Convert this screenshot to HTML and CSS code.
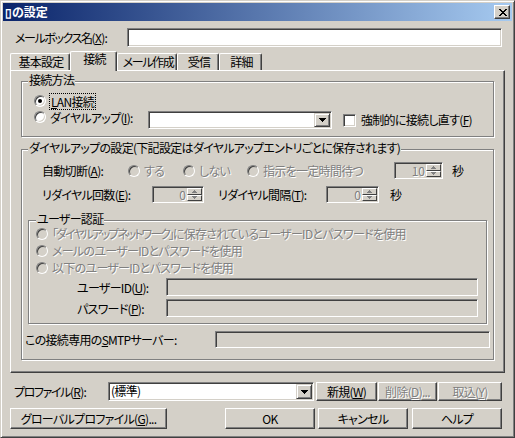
FILE: index.html
```html
<!DOCTYPE html>
<html lang="ja">
<head>
<meta charset="utf-8">
<title>の設定</title>
<link rel="stylesheet" href="styles.css">
</head>
<body>
<div class="window">
  <div class="titlebar">
    <span class="title">▯の設定</span>
    <span class="close"><svg width="8" height="7" viewBox="0 0 8 7" shape-rendering="crispEdges"><path d="M0 0h2v1H0zM6 0h2v1H6zM1 1h2v1H1zM5 1h2v1H5zM2 2h4v1H2zM3 3h2v1H3zM2 4h4v1H2zM1 5h2v1H1zM5 5h2v1H5zM0 6h2v1H0zM6 6h2v1H6z" fill="#000"/></svg></span>
  </div>

  <div class="client">
    <div class="row mailbox-row">
      <span class="lbl w-mailbox"><span class="tight">メールボックス名</span>(<u>X</u>):</span>
      <div class="edit mailbox-edit"></div>
    </div>

    <div class="tabs">
      <div class="tab t1">基本設定</div>
      <div class="tab sel t2">接続</div>
      <div class="tab t3"><span class="tight">メール作成</span></div>
      <div class="tab t4">受信</div>
      <div class="tab t5">詳細</div>
    </div>

    <div class="pane">
      <div class="group g1">
        <span class="legend">接続方法</span>
        <div class="row g1-r1">
          <span class="radio on"></span>
          <span class="opt focus"><u>L</u>AN接続</span>
        </div>
        <div class="row g1-r2">
          <div class="ritem w-dial">
            <span class="radio"></span>
            <span class="opt">ダイヤルアップ(<u>I</u>):</span>
          </div>
          <div class="edit combo dial-combo">
            <span class="combo-text"></span>
            <span class="dd"><svg width="7" height="4" viewBox="0 0 7 4" shape-rendering="crispEdges"><path d="M0 0h7v1H0zM1 1h5v1H1zM2 2h3v1H2zM3 3h1v1H3z" fill="#000"/></svg></span>
          </div>
          <span class="check"></span>
          <span class="check-lbl">強制的に接続し直す(<u>F</u>)</span>
        </div>
      </div>

      <div class="group g2">
        <span class="legend">ダイヤルアップの設定(下記設定はダイヤルアップエントリごとに保存されます)</span>
        <div class="row ra">
          <span class="lbl w-auto">自動切断(<u>A</u>):</span>
          <div class="ritem w-r1"><span class="radio dis"></span><span class="opt dis-t">する</span></div>
          <div class="ritem w-r2"><span class="radio dis"></span><span class="opt dis-t">しない</span></div>
          <div class="ritem w-r3"><span class="radio dis"></span><span class="opt dis-t">指示を一定時間待つ</span></div>
          <div class="spin w-s1">
            <span class="spin-val dis-t">10</span>
            <span class="spin-btns">
              <span class="sb"><svg width="5" height="3" viewBox="0 0 5 3" shape-rendering="crispEdges"><path d="M2 0h1v1H2zM1 1h3v1H1zM0 2h5v1H0z" fill="#808080"/></svg></span>
              <span class="sb"><svg width="5" height="3" viewBox="0 0 5 3" shape-rendering="crispEdges"><path d="M0 0h5v1H0zM1 1h3v1H1zM2 2h1v1H2z" fill="#808080"/></svg></span>
            </span>
          </div>
          <span class="sec">秒</span>
        </div>
        <div class="row rb">
          <span class="lbl w-redial">リダイヤル回数(<u>E</u>):</span>
          <div class="spin w-s2">
            <span class="spin-val dis-t">0</span>
            <span class="spin-btns">
              <span class="sb"><svg width="5" height="3" viewBox="0 0 5 3" shape-rendering="crispEdges"><path d="M2 0h1v1H2zM1 1h3v1H1zM0 2h5v1H0z" fill="#808080"/></svg></span>
              <span class="sb"><svg width="5" height="3" viewBox="0 0 5 3" shape-rendering="crispEdges"><path d="M0 0h5v1H0zM1 1h3v1H1zM2 2h1v1H2z" fill="#808080"/></svg></span>
            </span>
          </div>
          <span class="lbl w-interval">リダイヤル間隔(<u>T</u>):</span>
          <div class="spin w-s3">
            <span class="spin-val dis-t">0</span>
            <span class="spin-btns">
              <span class="sb"><svg width="5" height="3" viewBox="0 0 5 3" shape-rendering="crispEdges"><path d="M2 0h1v1H2zM1 1h3v1H1zM0 2h5v1H0z" fill="#808080"/></svg></span>
              <span class="sb"><svg width="5" height="3" viewBox="0 0 5 3" shape-rendering="crispEdges"><path d="M0 0h5v1H0zM1 1h3v1H1zM2 2h1v1H2z" fill="#808080"/></svg></span>
            </span>
          </div>
          <span class="sec sec2">秒</span>
        </div>

        <div class="group g3">
          <span class="legend">ユーザー認証</span>
          <div class="row arow first"><span class="radio dis"></span><span class="opt dis-t"><span class="tighter">「ダイヤルアップネットワーク」</span>に保存されているユーザーIDとパスワードを使用</span></div>
          <div class="row arow"><span class="radio dis"></span><span class="opt dis-t">メールのユーザーIDとパスワードを使用</span></div>
          <div class="row arow"><span class="radio dis"></span><span class="opt dis-t">以下のユーザーIDとパスワードを使用</span></div>
          <div class="row frow f-user">
            <span class="lbl w-cred">ユーザーID(<u>U</u>):</span>
            <div class="edit dis cred-edit"></div>
          </div>
          <div class="row frow f-pass">
            <span class="lbl w-cred">パスワード(<u>P</u>):</span>
            <div class="edit dis cred-edit"></div>
          </div>
        </div>

        <div class="row smtp-row">
          <span class="lbl w-smtp">この接続専用の<u>S</u>MTPサーバー:</span>
          <div class="edit dis smtp-edit"></div>
        </div>
      </div>
    </div>

    <div class="row profile-row">
      <span class="lbl w-profile"><span class="tight">プロファイル</span>(<u>R</u>):</span>
      <div class="edit combo profile-combo">
        <span class="combo-text">(標準)</span>
        <span class="dd"><svg width="7" height="4" viewBox="0 0 7 4" shape-rendering="crispEdges"><path d="M0 0h7v1H0zM1 1h5v1H1zM2 2h3v1H2zM3 3h1v1H3z" fill="#000"/></svg></span>
      </div>
      <span class="btn b-new">新規(<u>W</u>)</span>
      <span class="btn b-del dis-t">削除(<u>D</u>)...</span>
      <span class="btn b-imp dis-t">取込(<u>Y</u>)</span>
    </div>

    <div class="row bottom-row">
      <span class="btn b-global">グローバルプロファイル(<u>G</u>)...</span>
      <span class="btn b-ok">OK</span>
      <span class="btn b-cancel">キャンセル</span>
      <span class="btn b-help">ヘルプ</span>
    </div>
  </div>
</div>
</body>
</html>
```

FILE: styles.css
```css
* { box-sizing: border-box; }
html, body { margin: 0; padding: 0; }
body {
  width: 515px;
  height: 438px;
  overflow: hidden;
  background: #d4d0c8;
  color: #000;
  font-family: "Noto Sans CJK JP", "Noto Sans", sans-serif;
  font-size: 12px;
  line-height: 13px;
  letter-spacing: -0.7px;
  font-feature-settings: "palt" 1;
}
u { text-decoration: underline; text-underline-offset: 1px; }
.tight { letter-spacing: -1.4px; }
.tighter { letter-spacing: -2px; }

.window {
  width: 515px;
  height: 438px;
  background: #d4d0c8;
  border: 1px solid;
  border-color: #d4d0c8 #404040 #404040 #d4d0c8;
  box-shadow: inset 1px 1px #fff, inset -1px -1px #808080;
  padding: 2px;
}

.titlebar {
  height: 18px;
  display: flex;
  justify-content: space-between;
  align-items: flex-start;
  background: linear-gradient(to right, #0a246a, #a6caf0);
}
.title {
  color: #fff;
  font-weight: bold;
  line-height: 18px;
  padding-left: 2px;
  letter-spacing: 0;
}
.close {
  width: 16px;
  height: 14px;
  margin: 2px 2px 0 0;
  display: flex;
  align-items: center;
  justify-content: center;
  background: #d4d0c8;
  border: 1px solid;
  border-color: #fff #404040 #404040 #fff;
  box-shadow: inset -1px -1px #808080;
  padding-left: 1px;
}
.close svg { display: block; }

.client { display: flex; flex-direction: column; }

.row { display: flex; align-items: center; }
.lbl { flex: none; white-space: nowrap; }

/* sunken edit */
.edit {
  flex: none;
  background: #fff;
  border: 1px solid;
  border-color: #808080 #fff #fff #808080;
  box-shadow: inset 1px 1px #404040, inset -1px -1px #d4d0c8;
}
.edit.dis { background: #d4d0c8; }

.mailbox-row { margin: 7px 0 0 11px; height: 19px; }
.w-mailbox { width: 113px; padding-left: 1px; }
.mailbox-edit { width: 375px; height: 19px; }

/* tabs */
.tabs {
  display: flex;
  align-items: flex-end;
  height: 19px;
  margin: 4px 0 0 7px;
}
.tab {
  flex: none;
  height: 17px;
  border-top: 1px solid #fff;
  border-left: 1px solid #fff;
  border-right: 1px solid #404040;
  box-shadow: inset -1px 0 #808080;
  border-top-left-radius: 2px;
  border-top-right-radius: 2px;
  padding-left: 2px;
  text-align: center;
  line-height: 15px;
  white-space: nowrap;
  background: #d4d0c8;
}
.tab.sel {
  height: 20px;
  margin-bottom: -1px;
  line-height: 14px;
  position: relative;
  z-index: 1;
}
.t1 { width: 60px; }
.t2 { width: 47px; }
.t3 { width: 60px; }
.t4 { width: 42px; }
.t5 { width: 43px; }

.pane {
  width: 495px;
  height: 303px;
  margin-left: 7px;
  border: 1px solid;
  border-color: #fff #404040 #404040 #fff;
  box-shadow: inset -1px -1px #808080;
}

/* group boxes */
.group {
  position: relative;
  border: 1px solid #808080;
  box-shadow: inset 1px 1px #fff, 1px 1px #fff;
}
.legend {
  position: absolute;
  top: -8px;
  left: 6px;
  padding: 0 1px;
  line-height: 12px;
  background: #d4d0c8;
  white-space: nowrap;
}

.g1 { width: 473px; height: 56px; margin: 10px 0 0 10px; padding-left: 12px; }
.g1-r1 { margin-top: 11px; height: 16px; }
.g1-r2 { margin-top: 2px; height: 18px; align-items: flex-start; }
.w-dial { width: 114px; height: 12px; }
.dial-combo { width: 184px; height: 18px; }

.ritem { display: flex; align-items: center; flex: none; }
.opt { margin-left: 4px; white-space: nowrap; }
.focus { outline: 1px dotted #000; outline-offset: 1px; margin-left: 5px; }

.radio {
  flex: none;
  width: 12px;
  height: 12px;
  border-radius: 50%;
  border: 1px solid;
  border-color: #808080 #fff #fff #808080;
  box-shadow: inset 1px 1px #404040, inset -1px -1px #d4d0c8;
  background: #fff;
  position: relative;
}
.radio.on::after {
  content: "";
  position: absolute;
  left: 3px;
  top: 3px;
  width: 4px;
  height: 4px;
  border-radius: 50%;
  background: #000;
}
.radio.dis { background: #d4d0c8; }

.check {
  flex: none;
  width: 13px;
  height: 13px;
  margin: 3px 0 0 11px;
  background: #fff;
  border: 1px solid;
  border-color: #808080 #fff #fff #808080;
  box-shadow: inset 1px 1px #404040, inset -1px -1px #d4d0c8;
}
.check-lbl { margin: 2px 0 0 5px; white-space: nowrap; }

.dis-t { color: #808080; text-shadow: 1px 1px 0 #fff; }

/* combo */
.combo {
  display: flex;
  justify-content: space-between;
  padding: 1px;
}
.combo-text { padding-left: 1px; line-height: 13px; }
.dd {
  flex: none;
  width: 16px;
  height: 100%;
  display: flex;
  align-items: center;
  justify-content: center;
  background: #d4d0c8;
  border: 1px solid;
  border-color: #d4d0c8 #404040 #404040 #d4d0c8;
  box-shadow: inset 1px 1px #fff, inset -1px -1px #808080;
}
.dd svg { display: block; }

/* group 2 */
.g2 { width: 473px; height: 211px; margin: 12px 0 0 10px; }
.ra { margin-top: 12px; height: 17px; padding-left: 20px; }
.w-auto { width: 86px; }
.w-r1 { width: 55px; }
.w-r2 { width: 64px; }
.w-r3 { width: 147px; }
.rb { margin-top: 7px; height: 17px; padding-left: 20px; }
.w-redial { width: 110px; }
.w-interval { width: 108px; margin-left: 14px; }

.spin {
  flex: none;
  height: 17px;
  display: flex;
  background: #d4d0c8;
  border: 1px solid;
  border-color: #808080 #fff #fff #808080;
  box-shadow: inset 1px 1px #404040, inset -1px -1px #d4d0c8;
  padding: 1px;
}
.w-s1 { width: 49px; }
.w-s2 { width: 52px; }
.w-s3 { width: 53px; }
.spin-val { flex: 1; text-align: right; padding-right: 1px; line-height: 13px; letter-spacing: 0; }
.spin-btns { flex: none; width: 15px; display: flex; flex-direction: column; }
.sb {
  flex: 1;
  display: flex;
  align-items: center;
  justify-content: center;
  background: #d4d0c8;
  border: 1px solid;
  border-color: #fff #404040 #404040 #fff;
}
.sb svg { display: block; }
.sec { margin-left: 9px; }
.sec2 { margin-left: 11px; }

/* group 3 */
.g3 { width: 459px; height: 104px; margin: 17px 0 0 6px; }
.g3 .legend { left: 7px; }
.arow { height: 17px; padding-left: 7px; }
.arow.first { margin-top: 4px; }
.frow { height: 18px; }
.f-user { margin-top: 2px; }
.f-pass { margin-top: 3px; }
.w-cred { width: 137px; padding-left: 48px; }
.cred-edit { width: 312px; height: 18px; }

.smtp-row { margin-top: 7px; height: 17px; padding-left: 3px; }
.w-smtp { width: 190px; }
.smtp-edit { width: 275px; height: 17px; }

/* buttons */
.btn {
  flex: none;
  display: flex;
  align-items: center;
  justify-content: center;
  white-space: nowrap;
  background: #d4d0c8;
  border: 1px solid;
  border-color: #fff #404040 #404040 #fff;
  box-shadow: inset -1px -1px #808080;
}

.profile-row { margin-top: 9px; height: 19px; padding-left: 11px; }
.w-profile { width: 94px; }
.profile-combo { width: 206px; height: 19px; }
.b-new { width: 61px; height: 19px; margin-left: 2px; }
.b-del { width: 59px; height: 19px; margin-left: 1px; }
.b-imp { width: 64px; height: 19px; margin-left: 1px; }

.bottom-row { margin-top: 7px; height: 21px; padding-left: 7px; }
.bottom-row .btn { height: 21px; }
.b-global { width: 157px; }
.b-ok { width: 90px; margin-left: 58px; }
.b-cancel { width: 90px; margin-left: 3px; }
.b-help { width: 90px; margin-left: 4px; }
```
